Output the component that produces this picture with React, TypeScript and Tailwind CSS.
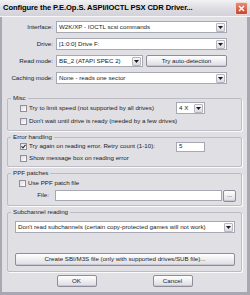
import React from 'react';

const DropArrow = () => (
  <span className="flex h-[9px] w-[9px] shrink-0 items-center justify-center rounded-[1px] border border-[#b7b6bf] bg-gradient-to-b from-[#f7f7f9] to-[#dcdbe2]">
    <svg width="5" height="3" viewBox="0 0 5 3">
      <path d="M0 0h5L2.5 3z" fill="#1b1b1b" />
    </svg>
  </span>
);

const Select = ({ value, className = '' }: { value: string; className?: string }) => (
  <div className={`flex h-[12px] items-center border border-[#a6a9b3] bg-white pl-[2px] pr-[1px] ${className}`}>
    <span className="flex-1 truncate leading-none">{value}</span>
    <DropArrow />
  </div>
);

const Button = ({ label, className = '' }: { label: string; className?: string }) => (
  <div
    className={`flex items-center justify-center rounded-[2px] border border-[#8e8d99] bg-gradient-to-b from-white to-[#dddce3] leading-none shadow-[inset_0_-1px_0_#c9c8d0] ${className}`}
  >
    {label}
  </div>
);

const Checkbox = ({ checked = false }: { checked?: boolean }) => (
  <span className="flex h-[7px] w-[7px] shrink-0 items-center justify-center border border-[#8f8e9a] bg-gradient-to-br from-[#dcdce2] to-white">
    {checked && (
      <svg width="5" height="5" viewBox="0 0 5 5">
        <path d="M0.5 2.4 2 3.9 4.5 0.9" stroke="#2b2b2b" strokeWidth="1.1" fill="none" />
      </svg>
    )}
  </span>
);

const Group = ({ title, className, children }: { title: string; className: string; children: React.ReactNode }) => (
  <fieldset className={`mx-[5px] w-[235px] rounded-[2px] border border-[#bdbcc4] shadow-[1px_1px_0_#fbfbfc] ${className}`}>
    <legend className="ml-[3px] px-[2px] leading-[8px]">{title}</legend>
    {children}
  </fieldset>
);

const Row = ({ label, children }: { label: string; children: React.ReactNode }) => (
  <div className="flex h-[12px] items-center">
    <span className="w-[51px] text-right leading-none">{label}</span>
    <div className="ml-[3px] flex items-center">{children}</div>
  </div>
);

export default function App() {
  return (
    <div className="flex h-[295px] w-[250px] flex-col bg-[#e0dfe4] font-['Liberation_Sans',Arial,sans-serif] text-[6.2px] text-[#1c1c1c]">
      {/* Title bar */}
      <div className="flex h-[17px] items-center border-b border-[#f6f6f8] bg-gradient-to-b from-[#f2f2f5] via-[#dedde3] to-[#d3d2d9] pl-[3px] pr-[2px]">
        <span className="flex-1 text-[7.6px] font-bold leading-none tracking-[-0.1px] text-black">
          Configure the P.E.Op.S. ASPI/IOCTL PSX CDR Driver...
        </span>
        <span className="flex h-[13px] w-[13px] items-center justify-center rounded-[2px] border border-[#f4d7cf] bg-gradient-to-b from-[#e98a73] to-[#c8432c]">
          <svg width="7" height="7" viewBox="0 0 7 7">
            <path d="M1 1l5 5M6 1L1 6" stroke="#fff" strokeWidth="1.4" />
          </svg>
        </span>
      </div>

      {/* Body */}
      <div className="flex flex-1 flex-col border-b-[3px] border-l-[2px] border-r-[3px] border-[#a8a7b2] pt-[4px]">
        <div className="flex flex-col gap-[5px]">
          <Row label="Interface:">
            <Select value="W2K/XP - IOCTL scsi commands" className="w-[171px]" />
          </Row>
          <Row label="Drive:">
            <Select value="[1:0:0] Drive F:" className="w-[171px]" />
          </Row>
          <Row label="Read mode:">
            <Select value="BE_2 (ATAPI SPEC 2)" className="w-[87px]" />
            <Button label="Try auto-detection" className="ml-[3px] h-[12px] w-[81px]" />
          </Row>
          <Row label="Caching mode:">
            <Select value="None - reads one sector" className="w-[171px]" />
          </Row>
        </div>

        <Group title="Misc" className="mt-[10px] h-[37px]">
          <div className="mt-[1px] flex h-[10px] items-center pl-[12px] pr-[36px]">
            <Checkbox />
            <span className="ml-[2px] leading-none">Try to limit speed (not supported by all drives)</span>
            <Select value="4 X" className="ml-auto h-[10px] w-[29px]" />
          </div>
          <div className="mt-[3px] flex h-[10px] items-center pl-[12px]">
            <Checkbox />
            <span className="ml-[2px] leading-none">Don't wait until drive is ready (needed by a few drives)</span>
          </div>
        </Group>

        <Group title="Error handling" className="mt-[2px] h-[34px]">
          <div className="flex h-[11px] items-center pl-[12px] pr-[36px]">
            <Checkbox checked />
            <span className="ml-[2px] leading-none">Try again on reading error. Retry count (1-10):</span>
            <div className="ml-auto flex h-[10px] w-[29px] items-center border border-[#a6a9b3] bg-white pl-[2px] leading-none">
              5
            </div>
          </div>
          <div className="mt-[1px] flex h-[10px] items-center pl-[12px]">
            <Checkbox />
            <span className="ml-[2px] leading-none">Show message box on reading error</span>
          </div>
        </Group>

        <Group title="PPF patches" className="mt-[2px] h-[37px]">
          <div className="mt-[1px] flex h-[10px] items-center pl-[11px]">
            <Checkbox />
            <span className="ml-[2px] leading-none">Use PPF patch file</span>
          </div>
          <div className="mt-[2px] flex h-[11px] items-center">
            <span className="w-[41px] text-right leading-none">File:</span>
            <div className="ml-[6px] h-[11px] w-[167px] border border-[#a6a9b3] bg-white" />
            <Button label="..." className="ml-[1px] h-[12px] w-[13px]" />
          </div>
        </Group>

        <Group title="Subchannel reading" className="mt-[2px] h-[64px]">
          <Select
            value="Don't read subchannels (certain copy-protected games will not work)"
            className="ml-[7px] mt-[5px] w-[220px]"
          />
          <Button
            label="Create SBI/M3S file (only with supported drives/SUB file)..."
            className="ml-[7px] mt-[20px] h-[13px] w-[220px]"
          />
        </Group>

        <div className="mt-[3px] flex justify-center gap-[56px]">
          <Button label="OK" className="h-[12px] w-[40px]" />
          <Button label="Cancel" className="h-[12px] w-[40px]" />
        </div>
      </div>
    </div>
  );
}
